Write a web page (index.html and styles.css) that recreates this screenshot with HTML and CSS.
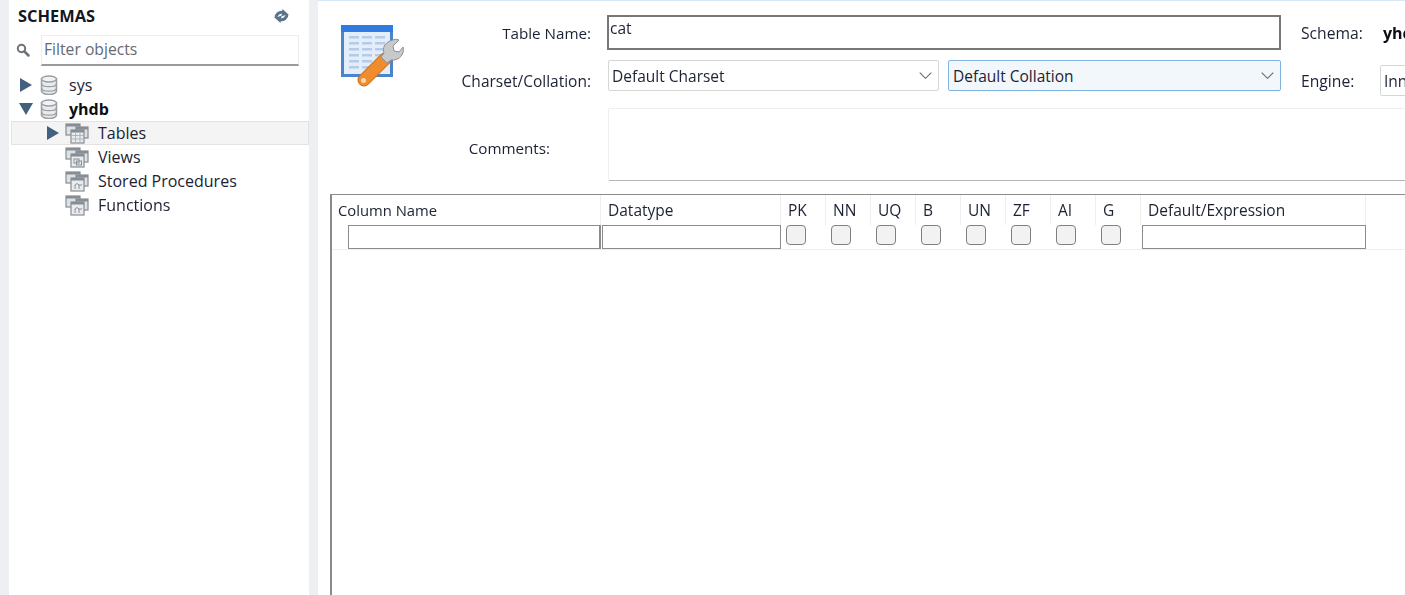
FILE: index.html
```html
<!DOCTYPE html>
<html lang="en">
<head>
<meta charset="utf-8">
<title>Table editor</title>
<link rel="stylesheet" href="styles.css">
</head>
<body>
<svg class="defs" width="0" height="0" aria-hidden="true">
  <defs>
    <g id="db">
      <path d="M1.500 4v12c0 2 3.500 3.500 7.500 3.500s7.500-1.500 7.500-3.500V4z" fill="#e8eaec" stroke="#9a9fa4" stroke-width="1.500"/>
      <ellipse cx="9" cy="4" rx="7.500" ry="3" fill="#f1f2f3" stroke="#9a9fa4" stroke-width="1.500"/>
      <path d="M1.500 8.500c0 2 3.500 3.200 7.500 3.200s7.500-1.200 7.500-3.200M1.500 13c0 2 3.500 3.200 7.500 3.200s7.500-1.200 7.500-3.200" fill="none" stroke="#9a9fa4" stroke-width="1.300"/>
    </g>
    <g id="stack">
      <rect x="1" y="1" width="14" height="11" fill="#dfe2e5" stroke="#868d94" stroke-width="1.200"/>
      <rect x="1" y="1" width="14" height="2.500" fill="#868d94"/>
      <rect x="11" y="4" width="12" height="11" fill="#dfe2e5" stroke="#868d94" stroke-width="1.200"/>
      <rect x="11" y="4" width="12" height="2.500" fill="#868d94"/>
      <rect x="6" y="7" width="13" height="13" fill="#e9ebed" stroke="#868d94" stroke-width="1.200"/>
      <rect x="6" y="7" width="13" height="2.500" fill="#868d94"/>
    </g>
  </defs>
</svg>

<aside class="sidebar">
  <header class="side-head">
    <h2 class="side-title">SCHEMAS</h2>
    <svg class="refresh" width="17" height="14" viewBox="0 0 17 14">
      <path d="M3 9A5.500 5.500 0 0 1 10 3.500M14 5A5.500 5.500 0 0 1 7 10.500" fill="none" stroke="#5a748b" stroke-width="3"/>
      <path d="M9.500 0L15 5l-6.500 2.500zM7.500 14L2 9l6.500-2.500z" fill="#5a748b"/>
    </svg>
  </header>
  <div class="filter">
    <svg class="search" width="14" height="14" viewBox="0 0 14 14">
      <circle cx="5.500" cy="5.500" r="3.700" fill="none" stroke="#6c7278" stroke-width="2"/>
      <path d="M8.500 8.500l4 4" stroke="#6c7278" stroke-width="2.500" stroke-linecap="round"/>
    </svg>
    <input class="filter-input" type="text" placeholder="Filter objects">
  </div>
  <ul class="tree">
    <li class="row schema">
      <svg class="arrow" width="12" height="14" viewBox="0 0 12 14"><path d="M0 0l12 7-12 7z" fill="#43607f"/></svg>
      <svg class="db-icon" width="18" height="20" viewBox="0 0 18 20"><use href="#db"/></svg>
      <span class="row-text">sys</span>
    </li>
    <li class="row schema">
      <svg class="arrow" width="14" height="12" viewBox="0 0 14 12"><path d="M0 0h14l-7 12z" fill="#43607f"/></svg>
      <svg class="db-icon" width="18" height="20" viewBox="0 0 18 20"><use href="#db"/></svg>
      <span class="row-text strong">yhdb</span>
    </li>
    <li class="row child selected">
      <svg class="arrow" width="12" height="14" viewBox="0 0 12 14"><path d="M0 0l12 7-12 7z" fill="#43607f"/></svg>
      <svg class="group-icon" width="24" height="21" viewBox="0 0 24 21"><use href="#stack"/><path d="M6 12.500h13M6 16h13M10.500 9.500V20M15 9.500V20" stroke="#b0b5b9" stroke-width="1"/></svg>
      <span class="row-text">Tables</span>
    </li>
    <li class="row child leaf">
      <svg class="group-icon" width="24" height="21" viewBox="0 0 24 21"><use href="#stack"/><rect x="9" y="12" width="5" height="4" fill="none" stroke="#8a9096"/><rect x="11.500" y="14" width="5" height="4" fill="none" stroke="#8a9096"/></svg>
      <span class="row-text">Views</span>
    </li>
    <li class="row child leaf">
      <svg class="group-icon" width="24" height="21" viewBox="0 0 24 21"><use href="#stack"/><path d="M10 18v-4l2-1.500 2 1.500v4M14 14h3" fill="none" stroke="#8a9096"/></svg>
      <span class="row-text">Stored Procedures</span>
    </li>
    <li class="row child leaf">
      <svg class="group-icon" width="24" height="21" viewBox="0 0 24 21"><use href="#stack"/><path d="M10 18v-4l2-1.500 2 1.500v4M14 14h3" fill="none" stroke="#8a9096"/></svg>
      <span class="row-text">Functions</span>
    </li>
  </ul>
</aside>

<main class="editor">
  <section class="form">
    <svg class="table-icon" width="64" height="64" viewBox="0 0 64 64">
      <rect x="1" y="1" width="52" height="52" fill="#4c84cc"/>
      <rect x="1" y="1" width="52" height="7" fill="#2f7be0"/>
      <rect x="4" y="8" width="46" height="42" fill="#e4eefa"/>
      <g fill="#b4cce8">
        <rect x="9" y="12" width="10" height="2.500"/><rect x="22" y="12" width="10" height="2.500"/><rect x="35" y="12" width="10" height="2.500"/>
        <rect x="9" y="18" width="10" height="2.500"/><rect x="22" y="18" width="10" height="2.500"/><rect x="35" y="18" width="10" height="2.500"/>
        <rect x="9" y="24" width="10" height="2.500"/><rect x="22" y="24" width="10" height="2.500"/><rect x="35" y="24" width="10" height="2.500"/>
        <rect x="9" y="30" width="10" height="2.500"/><rect x="22" y="30" width="10" height="2.500"/><rect x="35" y="30" width="10" height="2.500"/>
        <rect x="9" y="36" width="10" height="2.500"/><rect x="22" y="36" width="10" height="2.500"/>
        <rect x="9" y="42" width="10" height="2.500"/><rect x="22" y="42" width="8" height="2.500"/>
      </g>
      <path d="M24 56L45 35" fill="none" stroke="#c96f1e" stroke-width="13" stroke-linecap="round"/>
      <path d="M24 56L45 35" fill="none" stroke="#ef8c2e" stroke-width="11" stroke-linecap="round"/>
      <circle cx="23.500" cy="56.500" r="2.500" fill="#f9d6a6"/>
      <path d="M50 17c4-2 7-2 9-1l-6 6 1 5 5 1 4-5c2 6-3 14-12 13L47 39l-6-6 3-4c-2-5 1-10 6-12z" fill="#c7c9cb" stroke="#8e9093" stroke-width="1"/>
    </svg>

    <label class="label name-label" for="table-name">Table Name:</label>
    <input class="name-input" id="table-name" type="text" value="cat">
    <span class="meta-label">Schema:</span>
    <strong class="schema-value">yhdb</strong>

    <span class="label charset-label">Charset/Collation:</span>
    <div class="select-pair">
      <div class="select charset">
        <span>Default Charset</span>
        <svg class="chevron" width="13" height="7" viewBox="0 0 13 7"><path d="M.7.7l5.800 5.600L12.300.7" fill="none" stroke="#6a6a6a" stroke-width="1.100"/></svg>
      </div>
      <div class="select collation">
        <span>Default Collation</span>
        <svg class="chevron" width="13" height="7" viewBox="0 0 13 7"><path d="M.7.7l5.800 5.600L12.300.7" fill="none" stroke="#6a6a6a" stroke-width="1.100"/></svg>
      </div>
    </div>
    <span class="meta-label engine-label">Engine:</span>
    <div class="select engine"><span>InnoDB</span></div>

    <span class="label comments-label">Comments:</span>
    <div class="comments"></div>
  </section>

  <section class="columns">
    <div class="col-head">
      <span class="head-cell">Column Name</span>
      <span class="head-cell">Datatype</span>
      <span class="head-cell">PK</span>
      <span class="head-cell">NN</span>
      <span class="head-cell">UQ</span>
      <span class="head-cell">B</span>
      <span class="head-cell">UN</span>
      <span class="head-cell">ZF</span>
      <span class="head-cell">AI</span>
      <span class="head-cell">G</span>
      <span class="head-cell">Default/Expression</span>
    </div>
    <div class="col-filter">
      <span class="field name-field"></span>
      <span class="field type-field"></span>
      <span class="check"></span>
      <span class="check"></span>
      <span class="check"></span>
      <span class="check"></span>
      <span class="check"></span>
      <span class="check"></span>
      <span class="check"></span>
      <span class="check"></span>
      <span class="field default-field"></span>
    </div>
  </section>
</main>
</body>
</html>
```

FILE: styles.css
```css
* { box-sizing: border-box; }

html, body {
  margin: 0;
  height: 595px;
  overflow: hidden;
}

body {
  display: flex;
  background: #eeeff3;
  padding-left: 9px;
  font-family: "Open Sans", "Noto Sans", sans-serif;
  font-size: 15.5px;
  color: #1c2233;
  filter: blur(0.35px);
}

.defs { position: absolute; }

/* Sidebar */
.sidebar {
  flex: 0 0 300px;
  background: #fff;
  height: 595px;
}

.side-head {
  display: flex;
  justify-content: space-between;
  align-items: center;
  height: 34px;
  padding: 0 19px 3px 9px;
}

.side-title {
  margin: 0;
  font-size: 16.4px;
  font-weight: 700;
  color: #14171f;
}

.filter {
  display: flex;
  align-items: center;
  height: 32px;
  padding-left: 7px;
  gap: 11px;
}

.filter-input {
  width: 258px;
  height: 31px;
  border: 1px solid #eceded;
  border-bottom: 2px solid #9a9a9a;
  padding: 0 2px 2px;
  font: inherit;
  font-size: 15.7px;
  color: inherit;
  background: #fff;
  outline: none;
}

.filter-input::placeholder { color: #636a73; opacity: 1; }

.tree {
  list-style: none;
  margin: 7px 0 0;
  padding: 0;
  font-size: 16px;
}

.row {
  display: flex;
  align-items: center;
  height: 24px;
  margin-left: 2px;
  border: 1px solid transparent;
}

.schema { padding-left: 7px; }
.child { padding-left: 35px; }
.leaf { padding-left: 53px; }

.selected {
  background: #f4f4f4;
  border-color: #e3e3e3;
}

.arrow { flex: none; }
.schema .arrow { width: 14px; }
.db-icon { flex: none; margin-left: 7px; }
.group-icon { flex: none; margin-left: 6px; }
.leaf .group-icon { margin-left: 0; }

.schema .row-text { margin-left: 11px; }
.child .row-text { margin-left: 9px; }
.strong { font-weight: 700; color: #0c0e14; }

/* Editor */
.editor {
  flex: none;
  width: 1087px;
  margin-left: 9px;
  height: 595px;
  background: #fff;
  border-top: 1px solid #d4e8f8;
  overflow: hidden;
}

.form {
  display: grid;
  grid-template-columns: 64px 204px 673px 99px 60px;
  grid-template-rows: 35px 36px 73px;
  row-gap: 10px;
  padding: 14px 0 0 22px;
}

.table-icon {
  grid-column: 1;
  grid-row: 1 / span 2;
  margin-top: 9px;
}

.label {
  grid-column: 2;
  justify-self: end;
  align-self: center;
  padding-right: 17px;
}

.name-label { grid-row: 1; font-size: 15.2px; }
.charset-label { grid-row: 2; margin-top: 6px; }
.comments-label { grid-row: 3; padding-right: 58px; margin-top: 11px; font-size: 15.2px; }

.name-input {
  grid-column: 3;
  grid-row: 1;
  margin-left: -1px;
  width: 674px;
  height: 35px;
  border: 2px solid #777;
  padding: 0 1px 10px;
  font: inherit;
  color: inherit;
  outline: none;
}

.meta-label {
  grid-column: 4;
  grid-row: 1;
  align-self: center;
  padding-left: 20px;
  font-size: 15.7px;
}

.engine-label {
  grid-row: 2;
  margin-top: 6px;
}

.schema-value {
  grid-column: 5;
  grid-row: 1;
  align-self: center;
  padding-left: 3px;
  font-size: 16px;
  color: #0c0e14;
}

.select-pair {
  grid-column: 3;
  grid-row: 2;
  display: flex;
  gap: 9px;
  height: 31px;
}

.select {
  display: flex;
  align-items: center;
  justify-content: space-between;
  height: 31px;
  padding: 0 6px 0 3px;
  border: 1px solid #d6d6d6;
  border-radius: 2px;
  background: #fff;
}

.charset { width: 331px; }

.collation {
  width: 333px;
  padding-left: 4px;
  background: #f2f7fc;
  border-color: #7fb4e2;
}

.engine {
  grid-column: 5;
  grid-row: 2;
  align-self: end;
  width: 80px;
  padding-left: 3px;
}

.comments {
  grid-column: 3 / -1;
  grid-row: 3;
  margin-top: 2px;
  height: 73px;
  border: 1px solid #eeeeee;
  border-bottom: 1px solid #b4b4b4;
  border-radius: 2px;
}

/* Column grid */
.columns {
  margin: 15px 0 0 12px;
  height: 420px;
  border-top: 1px solid #8a8a8a;
  border-left: 2px solid #8a8a8a;
}

.col-head,
.col-filter {
  display: grid;
  grid-template-columns: 269px 180px repeat(8, 45px) 225px;
}

.col-head { height: 30px; }

.head-cell {
  padding: 4px 0 0 7px;
  border-right: 1px solid #eeeeee;
}

.head-cell:first-child { padding: 5px 0 0 6px; font-size: 14.8px; }

.col-filter {
  height: 25px;
  border-bottom: 1px solid #efefef;
}

.field {
  display: block;
  height: 24px;
  border: 1px solid #8c8c8c;
  background: #fff;
}

.name-field { margin-left: 16px; border-right-width: 2px; }
.type-field { margin-left: 1px; }
.default-field { margin-left: 1px; }

.check {
  display: block;
  width: 20px;
  height: 20px;
  margin-left: 5px;
  border: 1px solid #808080;
  border-radius: 4px;
  background: #f2f2f2;
}
```
